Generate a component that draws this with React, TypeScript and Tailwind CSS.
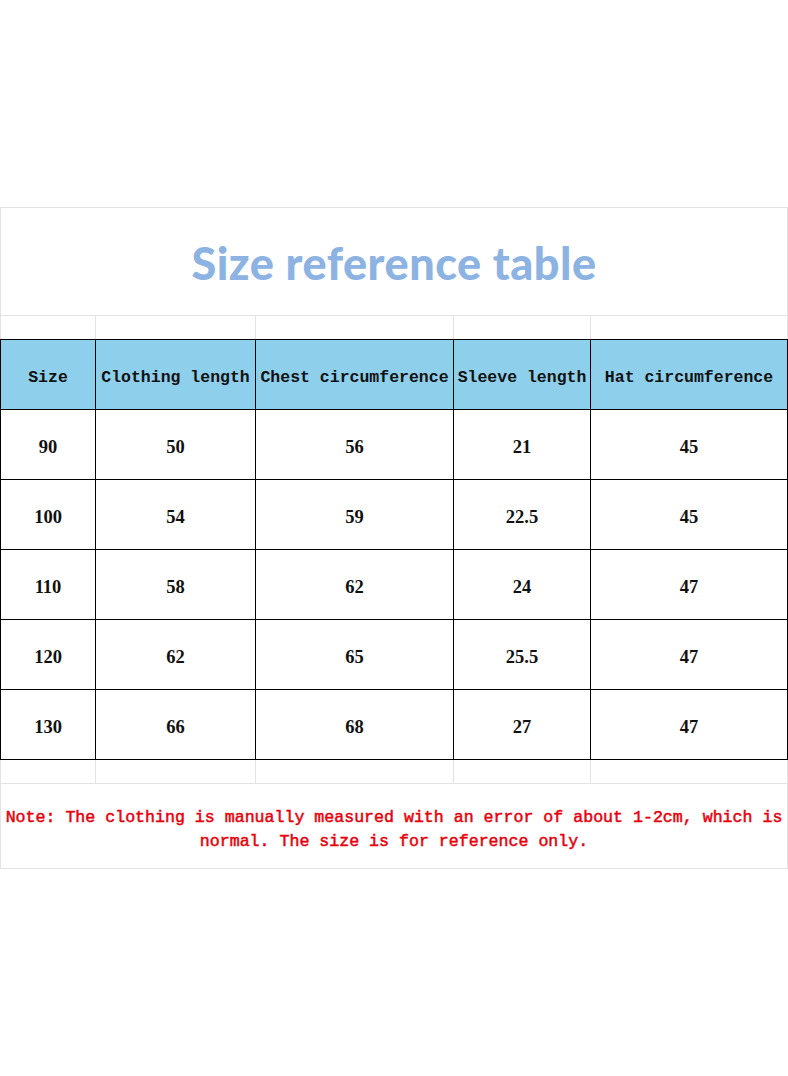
const cols = "grid grid-cols-[95px_160px_198px_137px_197px]";

const headers = ["Size", "Clothing length", "Chest circumference", "Sleeve length", "Hat circumference"];

const rows = [
  ["90", "50", "56", "21", "45"],
  ["100", "54", "59", "22.5", "45"],
  ["110", "58", "62", "24", "47"],
  ["120", "62", "65", "25.5", "47"],
  ["130", "66", "68", "27", "47"],
];

function SpacerRow() {
  return (
    <div className={`${cols} h-[23px]`}>
      {headers.map((h, i) => (
        <div key={h} className={i < 4 ? "border-r border-[#e3e3e3]" : ""} />
      ))}
    </div>
  );
}

export default function App() {
  return (
    <div className="w-[788px] h-[1076px] bg-white">
      <div className="h-[207px]" />
      <div className="border-t border-l border-r border-[#e3e3e3]">
        {/* Title */}
        <div className="h-[108px] border-b border-[#e3e3e3] flex items-center justify-center">
          <h1 className="text-[45px] font-black tracking-[0.5px] text-[#8db3e2] font-['Lato','DejaVu_Sans',sans-serif] mt-[4px]">
            Size reference table
          </h1>
        </div>

        <SpacerRow />

        {/* Table */}
        <div className="-ml-px -mr-px border-l border-black">
          <div className={`${cols} h-[71px] border-t border-black bg-[#8ecfeb]`}>
            {headers.map((h) => (
              <div
                key={h}
                className="flex items-center justify-center pt-[7px] border-r border-b border-black font-['Liberation_Mono',monospace] text-[16.5px] font-bold text-[#111] whitespace-nowrap"
              >
                {h}
              </div>
            ))}
          </div>
          {rows.map((r) => (
            <div key={r[0]} className={`${cols} h-[70px]`}>
              {r.map((v, i) => (
                <div
                  key={i}
                  className="flex items-center justify-center pt-[6px] border-r border-b border-black font-['Liberation_Serif',serif] text-[18.5px] font-bold text-[#111]"
                >
                  {v}
                </div>
              ))}
            </div>
          ))}
        </div>

        <SpacerRow />

        {/* Note */}
        <div className="h-[86px] pt-[8px] border-t border-b border-[#e3e3e3] flex items-center justify-center">
          <p className="text-center font-['Liberation_Mono',monospace] text-[16.6px] leading-[24px] font-normal [-webkit-text-stroke:0.5px_#e8000b] text-[#e8000b]">
            Note: The clothing is manually measured with an error of about 1-2cm, which is normal. The size is for reference only.
          </p>
        </div>
      </div>
    </div>
  );
}
